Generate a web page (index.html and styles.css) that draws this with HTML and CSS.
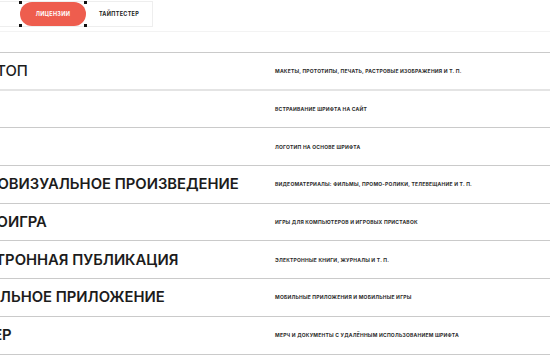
FILE: index.html
```html
<!DOCTYPE html>
<html>
<head>
    <meta charset="utf-8">
    <title>Лицензии</title>
    <meta name="viewport" content="width=device-width, initial-scale=1.0">
    <link rel="stylesheet" href="styles.css">
</head>
<body>
    <div class="top-bar">
        <div class="tabs">
            <div class="tab tab-active">
                ЛИЦЕНЗИИ
                <span class="handle handle-tl"></span>
                <span class="handle handle-tr"></span>
                <span class="handle handle-bl"></span>
                <span class="handle handle-br"></span>
            </div>
            <div class="tab">ТАЙПТЕСТЕР</div>
        </div>
    </div>

    <ul class="licenses">
        <li class="license license-first">
            <span class="license-name">ДЕСКТОП</span>
            <span class="license-desc">Макеты, прототипы, печать, растровые изображения и т. п.</span>
        </li>
        <li class="license">
            <span class="license-name">ВЕБ</span>
            <span class="license-desc">Встраивание шрифта на сайт</span>
        </li>
        <li class="license">
            <span class="license-name">ЛОГО</span>
            <span class="license-desc">Логотип на основе шрифта</span>
        </li>
        <li class="license">
            <span class="license-name">АУДИОВИЗУАЛЬНОЕ ПРОИЗВЕДЕНИЕ</span>
            <span class="license-desc">Видеоматериалы: фильмы, промо-ролики, телевещание и т. п.</span>
        </li>
        <li class="license">
            <span class="license-name">ВИДЕОИГРА</span>
            <span class="license-desc">Игры для компьютеров и игровых приставок</span>
        </li>
        <li class="license">
            <span class="license-name">ЭЛЕКТРОННАЯ ПУБЛИКАЦИЯ</span>
            <span class="license-desc">Электронные книги, журналы и т. п.</span>
        </li>
        <li class="license">
            <span class="license-name">МОБИЛЬНОЕ ПРИЛОЖЕНИЕ</span>
            <span class="license-desc">Мобильные приложения и мобильные игры</span>
        </li>
        <li class="license">
            <span class="license-name">СЕРВЕР</span>
            <span class="license-desc">Мерч и документы с удалённым использованием шрифта</span>
        </li>
    </ul>
</body>
</html>
```

FILE: styles.css
```css
* {
    box-sizing: border-box;
}

body {
    margin: 0;
    background-color: white;
    color: #1c1c1c;
    font-family: 'Inter', 'Liberation Sans', sans-serif;
    overflow: hidden;
}

.top-bar {
    height: 32px;
    padding-top: 1px;
    border-bottom: 1px solid #f3f3f3;
}

.tabs {
    display: flex;
    width: 154px;
    height: 26px;
    margin-left: -1px;
    padding-left: 21px;
    border: 1px solid #eeeeee;
    border-left: none;
}

.tab {
    position: relative;
    display: flex;
    align-items: center;
    justify-content: center;
    width: 66px;
    height: 24px;
    font-size: 5.5px;
    font-weight: 700;
    letter-spacing: 0.3px;
    color: #1c1c1c;
}

.tab-active {
    background-color: #ee5d4e;
    color: white;
    border-radius: 12px;
}

.handle {
    position: absolute;
    width: 3px;
    height: 3px;
    background-color: #111;
}

.handle-tl { top: -1px; left: -1px; }
.handle-tr { top: -1px; right: -1px; }
.handle-bl { bottom: -1px; left: -1px; }
.handle-br { bottom: -1px; right: -1px; }

.licenses {
    list-style: none;
    margin: 20px 0 0;
    padding: 0;
    border-top: 1px solid #cacaca;
}

.license {
    display: flex;
    align-items: center;
    height: 37.7px;
    margin-left: -46px;
    border-bottom: 1px solid #cacaca;
}

.license-first {
    border-bottom: 2px solid #e4e4e4;
}

.license-name {
    width: 321px;
    flex-shrink: 0;
    font-size: 14.8px;
    font-weight: 600;
    white-space: nowrap;
}

.license-first .license-name {
    font-weight: 500;
}

.license-desc {
    font-size: 5px;
    font-weight: 700;
    letter-spacing: 0.22px;
    text-transform: uppercase;
    color: #2a2a2a;
    white-space: nowrap;
}
```
